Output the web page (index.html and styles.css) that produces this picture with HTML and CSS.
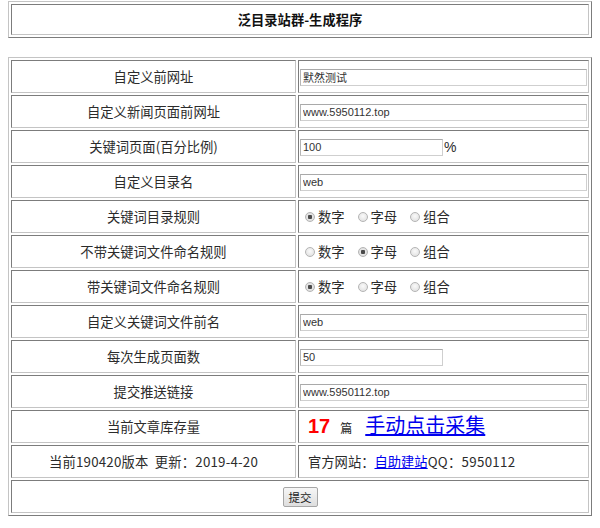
FILE: index.html
```html
<!DOCTYPE html>
<html lang="zh-CN">
<head>
<meta charset="utf-8">
<title>泛目录站群-生成程序</title>
<link rel="stylesheet" href="styles.css">
</head>
<body>
<table class="grid head">
  <tr><td class="title">泛目录站群-生成程序</td></tr>
</table>
<table class="grid form">
  <tr><td class="label">自定义前网址</td><td class="field"><input class="text wide" type="text" value="默然测试"></td></tr>
  <tr><td class="label">自定义新闻页面前网址</td><td class="field"><input class="text wide" type="text" value="www.5950112.top"></td></tr>
  <tr><td class="label">关键词页面(百分比例)</td><td class="field"><input class="text short" type="text" value="100"><span class="pct">%</span></td></tr>
  <tr><td class="label">自定义目录名</td><td class="field"><input class="text wide" type="text" value="web"></td></tr>
  <tr><td class="label">关键词目录规则</td><td class="field radios">
    <label><input type="radio" name="r1" checked>数字</label>
    <label><input type="radio" name="r1">字母</label>
    <label><input type="radio" name="r1">组合</label>
  </td></tr>
  <tr><td class="label">不带关键词文件命名规则</td><td class="field radios">
    <label><input type="radio" name="r2">数字</label>
    <label><input type="radio" name="r2" checked>字母</label>
    <label><input type="radio" name="r2">组合</label>
  </td></tr>
  <tr><td class="label">带关键词文件命名规则</td><td class="field radios">
    <label><input type="radio" name="r3" checked>数字</label>
    <label><input type="radio" name="r3">字母</label>
    <label><input type="radio" name="r3">组合</label>
  </td></tr>
  <tr><td class="label">自定义关键词文件前名</td><td class="field"><input class="text wide" type="text" value="web"></td></tr>
  <tr><td class="label">每次生成页面数</td><td class="field"><input class="text short" type="text" value="50"></td></tr>
  <tr><td class="label">提交推送链接</td><td class="field"><input class="text wide" type="text" value="www.5950112.top"></td></tr>
  <tr><td class="label">当前文章库存量</td><td class="field padded"><span class="count">17</span><span class="unit">篇</span><a class="collect" href="#">手动点击采集</a></td></tr>
  <tr><td class="label version">当前190420版本&nbsp;&nbsp;更新：2019-4-20</td><td class="field padded">官方网站：<a class="site" href="#">自助建站</a><span class="qq">QQ：5950112</span></td></tr>
  <tr><td class="submit-cell" colspan="2"><button class="submit" type="button">提交</button></td></tr>
</table>
</body>
</html>
```

FILE: styles.css
```css
html, body {
  background: #fff;
}

body {
  margin: 1px 8px 0;
  font-family: "Noto Sans CJK SC", "Noto Sans", sans-serif;
  font-size: 13.3px;
  color: #2b2b2b;
}

.grid {
  width: 100%;
  border-collapse: separate;
  border-spacing: 2px;
  border: 1px solid;
  border-color: #c4c4c4 #7c7c7c #7c7c7c #c4c4c4;
}

.grid td {
  border: 1px solid;
  border-color: #7c7c7c #c4c4c4 #c4c4c4 #7c7c7c;
  padding: 1px;
  line-height: 18px;
}

.grid .title {
  height: 27px;
  text-align: center;
  font-weight: bold;
  color: #111;
}

.form {
  margin-top: 19px;
}

.form td {
  height: 29px;
}

.grid .label {
  width: 281px;
  text-align: center;
}

.grid .version {
  letter-spacing: 0.2px;
}

.field {
  text-align: left;
}

.text {
  box-sizing: border-box;
  height: 17px;
  margin: 0;
  padding: 0 2px;
  border: 1px solid;
  border-color: #a9a9a9 #cfcfcf #cfcfcf #b5b5b5;
  font-family: "Liberation Sans", Arial, sans-serif;
  font-size: 11px;
  color: #333;
  vertical-align: middle;
}

.wide {
  width: 100%;
}

.short {
  width: 143px;
}

.pct {
  margin-left: 1px;
  font-family: "Liberation Sans", Arial, sans-serif;
  font-size: 14px;
  vertical-align: middle;
}

.radios label {
  display: inline-flex;
  align-items: center;
  margin-right: 5px;
}

.radios input {
  appearance: none;
  -webkit-appearance: none;
  box-sizing: border-box;
  width: 10px;
  height: 10px;
  margin: 0 3px 0 5px;
  border: 1px solid #b4b4b4;
  border-radius: 50%;
  background: radial-gradient(circle at 50% 40%, #fafafa 0%, #dcdcdc 100%);
}

.radios input:checked {
  background: radial-gradient(circle, #4a4a4a 0 2px, #e6e6e6 2.5px, #d6d6d6 100%);
}

.grid .padded {
  padding-left: 9px;
}

.count {
  font-family: "Liberation Sans", Arial, sans-serif;
  font-weight: bold;
  font-size: 20px;
  color: #f00;
}

.unit {
  margin: 0 13px 0 10px;
  font-size: 12px;
}

.collect {
  font-size: 20px;
  color: #00e;
}

.site {
  color: #00e;
}

.qq {
  letter-spacing: 0.3px;
}

.submit-cell {
  text-align: center;
}

.submit {
  height: 20px;
  padding: 0 5px;
  border: 1px solid #a6a6a6;
  border-radius: 2px;
  background: linear-gradient(#f6f6f6, #dedede);
  font-family: "Noto Sans CJK SC", sans-serif;
  font-size: 11.5px;
  color: #222;
  line-height: 18px;
}
```
